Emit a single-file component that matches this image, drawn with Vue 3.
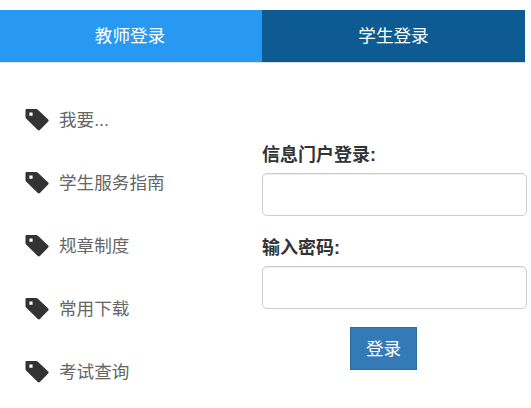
<script setup>
const links = ['我要...', '学生服务指南', '规章制度', '常用下载', '考试查询']
</script>

<template>
  <div class="page">
    <div class="tabs">
      <div class="tab teacher">教师登录</div>
      <div class="tab student">学生登录</div>
    </div>
    <div class="body">
      <ul class="links">
        <li v-for="l in links" :key="l" class="link">
          <svg class="tag" viewBox="0 0 24 22" width="24" height="22">
            <path fill="#333" fill-rule="evenodd" d="M.5 1.200C.5.500 1 0 1.700 0H11c.8 0 1.400.3 1.900.8l10.300 9.800c.6.600.6 1.400 0 2L14.900 21c-.6.600-1.500.6-2.100 0L1.300 9.800C.8 9.300.5 8.700.5 8zM4.400 3.500v3.200h3.200V3.500z"/>
          </svg>
          <span class="link-text">{{ l }}</span>
        </li>
      </ul>
      <form class="form" @submit.prevent>
        <label class="label">信息门户登录:</label>
        <input class="input" type="text" />
        <label class="label second">输入密码:</label>
        <input class="input" type="password" />
        <div class="actions"><button class="btn" type="submit">登录</button></div>
      </form>
    </div>
  </div>
</template>

<style scoped>
.page {
  width: 531px;
  height: 408px;
  overflow: hidden;
  padding-top: 10px;
  box-sizing: border-box;
  background: #fff;
  font-family: "Liberation Sans", "Noto Sans CJK SC", sans-serif;
  color: #333;
}
.tabs {
  display: flex;
  width: 525px;
  height: 53px;
  border-bottom: 1px solid #ddd;
  box-sizing: border-box;
}
.tab {
  display: flex;
  align-items: center;
  justify-content: center;
  color: #fff;
  font-size: 17.6px;
  padding-bottom: 4px;
  box-sizing: border-box;
}
.teacher { background: #2799f2; width: 262px; padding-right: 2px; }
.student { background: #0e5b93; width: 263px; }
.body { display: flex; }
.links {
  list-style: none;
  margin: 0;
  padding: 26px 0 0 25px;
  width: 262px;
  box-sizing: border-box;
}
.link {
  display: flex;
  align-items: center;
  gap: 10px;
  height: 63px;
  color: #666;
  font-size: 17.6px;
}
.link-text { padding-bottom: 4px; }
.tag { flex: none; margin-top: -1px; }
.form {
  width: 265px;
  padding-top: 81px;
  display: flex;
  flex-direction: column;
}
.label {
  font-size: 18px;
  font-weight: 700;
  line-height: 23px;
  margin-bottom: 6px;
  color: #333;
}
.second { margin-top: 21px; }
.input {
  height: 43px;
  box-sizing: border-box;
  border: 1px solid #ccc;
  border-radius: 5px;
  background: #fff;
  outline: none;
  box-shadow: inset 0 1px 1px rgba(0, 0, 0, 0.075);
}
.actions { display: flex; justify-content: center; padding: 18px 22px 0 0; }
.btn {
  width: 67px;
  height: 43px;
  border: 1px solid #2e6da4;
  background: #337ab7;
  color: #fff;
  font-size: 17.6px;
  font-family: inherit;
  padding: 0 0 3px;
}
</style>
